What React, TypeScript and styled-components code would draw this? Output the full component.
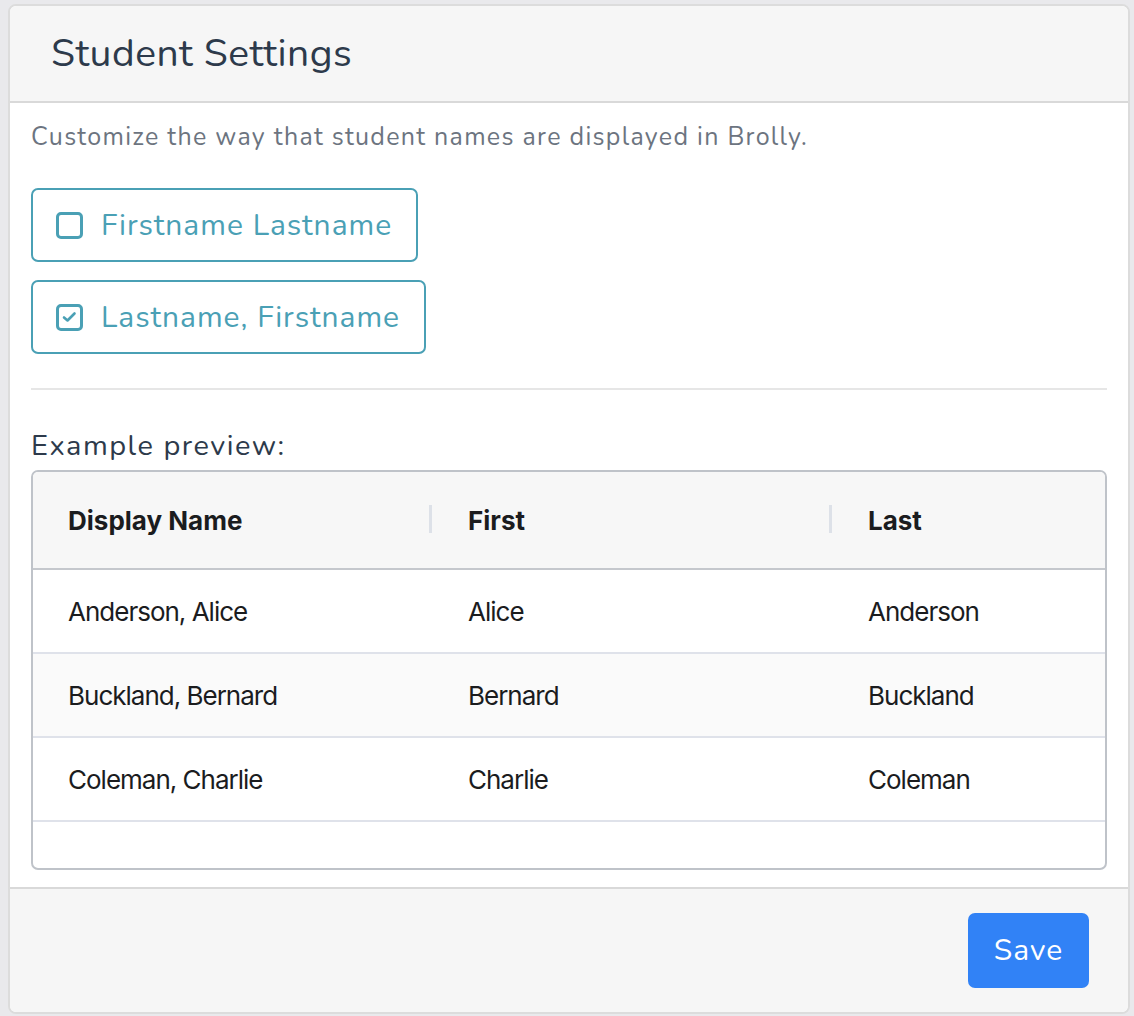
import styled, { createGlobalStyle } from 'styled-components';

const GlobalStyle = createGlobalStyle`
  html, body {
    margin: 0;
    padding: 0;
    background: #e9e9ec;
  }
  body {
    padding: 4px 4px 3px 8px;
  }
`;

const Modal = styled.section`
  background: white;
  border: 2px solid #dcdcdc;
  border-radius: 8px;
  overflow: hidden;
  font-family: 'Nunito', 'Lato', sans-serif;
`;

const Header = styled.header`
  background: #f6f6f6;
  border-bottom: 2px solid #d9d9d9;
  height: 95px;
  display: flex;
  align-items: center;
  padding-left: 41px;
`;

const Title = styled.h1`
  margin: 0;
  font-size: 39px;
  font-weight: 400;
  letter-spacing: 0.5px;
  color: #2d3a4b;
`;

const Body = styled.div`
  padding: 16px 21px 17px;
`;

const Description = styled.p`
  margin: 0 0 33px;
  font-size: 25px;
  line-height: 36px;
  letter-spacing: 1.3px;
  color: #6c7480;
`;

const Options = styled.div`
  display: flex;
  flex-direction: column;
  align-items: flex-start;
  gap: 18px;
`;

const OptionButton = styled.button`
  display: flex;
  align-items: center;
  gap: 18px;
  height: 74px;
  padding: 0 24px 0 23px;
  background: white;
  border: 2px solid #4aa0b5;
  border-radius: 7px;
  color: #4aa0b5;
  font-family: inherit;
  font-size: 30px;
  letter-spacing: 1px;
  cursor: pointer;
`;

const Box = styled.span`
  box-sizing: border-box;
  width: 27px;
  height: 27px;
  border: 3px solid #4aa0b5;
  border-radius: 5px;
  display: flex;
  align-items: center;
  justify-content: center;
`;

const Divider = styled.hr`
  border: none;
  border-top: 2px solid #e6e6e6;
  margin: 34px 0 38px;
`;

const PreviewLabel = styled.div`
  font-size: 29px;
  line-height: 36px;
  letter-spacing: 1.5px;
  color: #2d3a4b;
  margin-bottom: 6px;
`;

const Table = styled.div`
  border: 2px solid #bfc3c9;
  border-radius: 7px;
  overflow: hidden;
  font-family: 'Inter', sans-serif;
  padding-bottom: 46px;
`;

const Row = styled.div<{ $head?: boolean; $alt?: boolean }>`
  display: grid;
  grid-template-columns: 400px 400px 1fr;
  height: ${(p) => (p.$head ? 96 : 82)}px;
  background: ${(p) => (p.$head ? '#f7f7f7' : p.$alt ? '#fafafa' : 'white')};
  border-bottom: 2px solid ${(p) => (p.$head ? '#c5c8cd' : '#dfe2ea')};
`;

const Cell = styled.div<{ $head?: boolean; $sep?: boolean }>`
  position: relative;
  display: flex;
  align-items: center;
  padding-left: 35px;
  font-size: 26px;
  font-weight: ${(p) => (p.$head ? 700 : 400)};
  letter-spacing: ${(p) => (p.$head ? '0px' : '-1px')};
  color: #1b1c1e;

  &::after {
    content: '';
    display: ${(p) => (p.$sep ? 'block' : 'none')};
    position: absolute;
    right: 1px;
    top: 33px;
    width: 3px;
    height: 28px;
    background: #dde1e8;
  }
`;

const Footer = styled.footer`
  background: #f6f6f6;
  border-top: 2px solid #d9d9d9;
  height: 123px;
  display: flex;
  align-items: center;
  justify-content: flex-end;
  padding-right: 39px;
`;

const SaveButton = styled.button`
  width: 121px;
  height: 75px;
  border: none;
  border-radius: 7px;
  background: #3182f6;
  color: white;
  font-family: 'Nunito', 'Lato', sans-serif;
  font-size: 30px;
  letter-spacing: 1px;
  cursor: pointer;
`;

const students = [
  { first: 'Alice', last: 'Anderson' },
  { first: 'Bernard', last: 'Buckland' },
  { first: 'Charlie', last: 'Coleman' },
];

function Check({ checked }: { checked: boolean }) {
  return (
    <Box>
      {checked && (
        <svg width="15" height="12" viewBox="0 0 15 12">
          <path d="M2 6.5 L5.5 9.5 L12.5 2.5" fill="none" stroke="#4aa0b5" strokeWidth="2.6" strokeLinecap="round" strokeLinejoin="round" />
        </svg>
      )}
    </Box>
  );
}

export default function App() {
  return (
    <>
      <GlobalStyle />
      <Modal>
        <Header>
          <Title>Student Settings</Title>
        </Header>
        <Body>
          <Description>Customize the way that student names are displayed in Brolly.</Description>
          <Options>
            <OptionButton>
              <Check checked={false} />
              Firstname Lastname
            </OptionButton>
            <OptionButton>
              <Check checked />
              Lastname, Firstname
            </OptionButton>
          </Options>
          <Divider />
          <PreviewLabel>Example preview:</PreviewLabel>
          <Table>
            <Row $head>
              <Cell $head $sep>Display Name</Cell>
              <Cell $head $sep>First</Cell>
              <Cell $head>Last</Cell>
            </Row>
            {students.map((s, i) => (
              <Row key={s.last} $alt={i % 2 === 1}>
                <Cell>{s.last}, {s.first}</Cell>
                <Cell>{s.first}</Cell>
                <Cell>{s.last}</Cell>
              </Row>
            ))}
          </Table>
        </Body>
        <Footer>
          <SaveButton>Save</SaveButton>
        </Footer>
      </Modal>
    </>
  );
}
